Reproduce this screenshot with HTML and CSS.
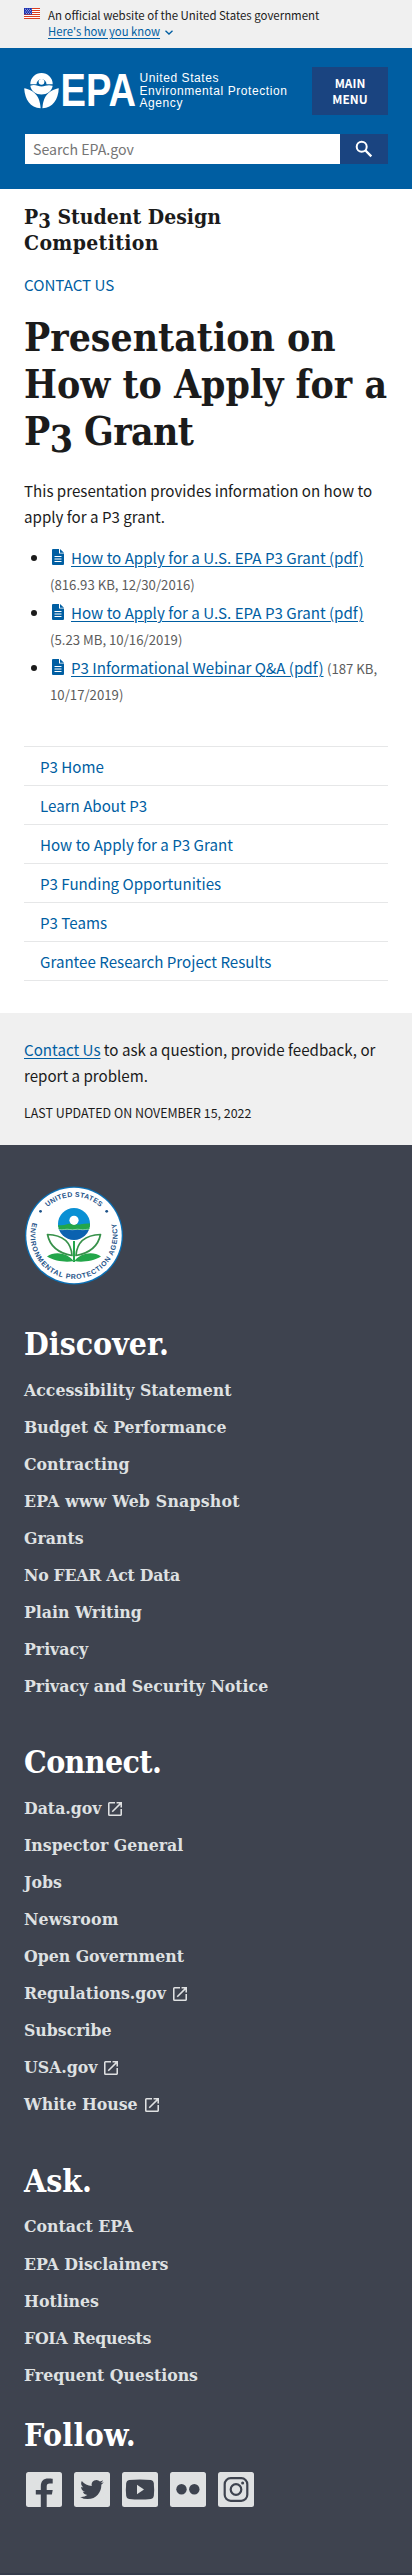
FILE: index.html
```html
<!DOCTYPE html>
<html lang="en">
<head>
<meta charset="utf-8">
<title>Presentation on How to Apply for a P3 Grant | US EPA</title>
<link rel="stylesheet" href="styles.css">
</head>
<body>
<svg class="defs" width="0" height="0">
  <symbol id="doc" viewBox="0 0 12 16">
    <path fill="#005ea2" d="M0 1a1 1 0 0 1 1-1h6v4.500h5V15a1 1 0 0 1-1 1H1a1 1 0 0 1-1-1z"/>
    <path fill="#005ea2" d="M8 0l4 3.700H8z"/>
    <path stroke="#fff" stroke-width="1" d="M2.500 7.500h7M2.500 10h7M2.500 12.500h7"/>
  </symbol>
  <symbol id="ext" viewBox="3 3 18 18">
    <path fill="currentColor" d="M19 19H5V5h7V3H5a2 2 0 0 0-2 2v14a2 2 0 0 0 2 2h14c1.100 0 2-.9 2-2v-7h-2v7zM14 3v2h3.590l-9.830 9.830 1.410 1.410L19 6.410V10h2V3h-7z"/>
  </symbol>
</svg>

<section class="banner">
  <svg class="flag" viewBox="0 0 16 11" width="16" height="11">
    <path fill="#fff" d="M0 0h16v11H0z"/>
    <path stroke="#db3e1f" stroke-width="1" d="M0 .5h16M0 2.500h16M0 4.500h16M0 6.500h16M0 8.500h16M0 10.500h16"/>
    <path fill="#1e33b1" d="M0 0h8v6.500H0z"/>
    <path stroke="#fff" stroke-width=".7" stroke-dasharray=".8 1.200" d="M1 1.300h6.500M2 2.700h5M1 4.100h6.500M2 5.500h5"/>
  </svg>
  <div class="banner-text">
    <div>An official website of the United States government</div>
    <div><a class="link banner-link" href="#">Here's how you know</a><svg class="chev" viewBox="0 0 8 5" width="8" height="5"><path fill="none" stroke="#005ea2" stroke-width="1.300" d="M.5 .7L4 4L7.500 .7"/></svg></div>
  </div>
</section>

<header class="header">
  <div class="brand-row">
    <div class="logo">
      <svg class="logo-mark" viewBox="0 0 113 38" width="113" height="38" fill="#fff">
        <path d="M6.300 12.200a11.200 11.200 0 0 1 22.400 0h-6.200a5 5 0 0 0-10 0z"/>
        <circle cx="17.500" cy="9.800" r="2.900"/>
        <path d="M6.300 13.800c2.500-1.200 5-.9 7.500 0s5 .9 7.500 0 5-.9 7.400 0c-1 5.700-5.700 8.700-11.200 8.700S7.300 19.500 6.300 13.800z"/>
        <path d="M.2 16.300C8 18 15.800 22 16.600 36.300 6 35.500 1 28 .2 16.300z"/>
        <path d="M34.800 16.300C27 18 19.200 22 18.400 36.300 29 35.500 34 28 34.800 16.300z"/>
        <text class="logo-epa" x="36.500" y="34.300" textLength="75.500" lengthAdjust="spacingAndGlyphs">EPA</text>
      </svg>
      <div class="logo-name">
        <div>United States</div>
        <div>Environmental Protection</div>
        <div>Agency</div>
      </div>
    </div>
    <button class="menu-btn">MAIN<br>MENU</button>
  </div>
  <div class="search">
    <div class="search-input">Search EPA.gov</div>
    <button class="search-btn"><svg viewBox="0 0 18 18" width="18" height="18"><circle cx="6.700" cy="6.700" r="5" fill="none" stroke="#fff" stroke-width="2"/><path d="M10.500 10.500L16.300 16.300" stroke="#fff" stroke-width="2.400"/></svg></button>
  </div>
</header>

<main class="main">
  <h2 class="site-title">P<span class="osf">3</span> Student Design<br><span class="wide">Competition</span></h2>
  <a class="contact" href="#">CONTACT US</a>
  <h1 class="page-title">Presentation on<br>How to Apply for a<br><span class="tight">P<span class="osf">3</span> Grant</span></h1>
  <p class="intro">This presentation provides information on how to<br>apply for a P3 grant.</p>
  <ul class="files">
    <li><svg class="doc"><use href="#doc"/></svg><a class="link" href="#">How to Apply for a U.S. EPA P3 Grant (pdf)</a><br><span class="meta">(816.93 KB, 12/30/2016)</span></li>
    <li><svg class="doc"><use href="#doc"/></svg><a class="link" href="#">How to Apply for a U.S. EPA P3 Grant (pdf)</a><br><span class="meta">(5.23 MB, 10/16/2019)</span></li>
    <li><svg class="doc"><use href="#doc"/></svg><a class="link" href="#">P3 Informational Webinar Q&amp;A (pdf)</a> <span class="meta">(187 KB,<br>10/17/2019)</span></li>
  </ul>
  <nav class="sidenav">
    <a href="#">P3 Home</a>
    <a href="#">Learn About P3</a>
    <a href="#">How to Apply for a P3 Grant</a>
    <a href="#">P3 Funding Opportunities</a>
    <a href="#">P3 Teams</a>
    <a href="#">Grantee Research Project Results</a>
  </nav>
</main>

<section class="feedback">
  <p class="ask"><a class="link" href="#">Contact Us</a> to ask a question, provide feedback, or<br>report a problem.</p>
  <p class="updated">LAST UPDATED ON NOVEMBER 15, 2022</p>
</section>

<footer class="footer">
  <svg class="seal" viewBox="0 0 100 100" width="100" height="100">
    <defs>
      <path id="arcTop" d="M11.300 49.500A38.700 38.700 0 0 1 88.700 49.500"/>
      <path id="arcBottom" d="M11.600 29A43.500 43.500 0 1 0 88.400 29"/>
      <clipPath id="globe"><circle cx="50" cy="38" r="16"/></clipPath>
    </defs>
    <circle cx="50" cy="49.500" r="49" fill="#0b70b5"/>
    <circle cx="50" cy="49.500" r="47.700" fill="#fff"/>
    <text class="seal-text"><textPath href="#arcTop" startOffset="50%" text-anchor="middle">UNITED STATES</textPath></text>
    <text class="seal-text seal-bottom"><textPath href="#arcBottom" startOffset="50%" text-anchor="middle">ENVIRONMENTAL PROTECTION AGENCY</textPath></text>
    <circle cx="16.500" cy="25.300" r="1.400" fill="#1d5288"/>
    <circle cx="82.700" cy="25.300" r="1.400" fill="#1d5288"/>
    <g clip-path="url(#globe)">
      <path fill="#0a90d4" d="M30 20h40v21H30z"/>
      <path fill="#0b62b0" d="M30 42h40v14H30z"/>
      <path fill="#23a64a" d="M30 38c5 1.500 9 1.500 13 .3s8 .2 11 .2 8-2 16-.5v6H30z"/>
      <path fill="none" stroke="#bfe3f2" stroke-width=".6" d="M30 43.500c4-1 7 1 10.500 0s7 1 10.500 0 7 1 10.500 0 5 1 8 0"/>
    </g>
    <circle cx="50" cy="34.300" r="4.600" fill="#fff"/>
    <path fill="#23a64a" d="M49 55h2v21h-2zM49.500 75C44 67 31 64.500 23 70.500c8 5 20 6 26.500 4.500zM50.500 75C56 67 69 64.500 77 70.500c-8 5-20 6-26.500 4.500z"/>
    <path fill="#fff" stroke="#37914a" stroke-width="1.700" stroke-linejoin="round" d="M23.500 48.500C38 49 47 55 48 69.500C34 67 26 61 23.500 48.500zM76.500 48.500C62 49 53 55 52 69.500C66 67 74 61 76.500 48.500z"/>
  </svg>

  <section class="group">
    <h2>Discover.</h2>
    <ul>
      <li>Accessibility Statement</li><li>Budget &amp; Performance</li><li>Contracting</li><li class="loose">EPA www Web Snapshot</li><li>Grants</li><li class="snug">No FEAR Act Data</li><li>Plain Writing</li><li>Privacy</li><li>Privacy and Security Notice</li>
    </ul>
  </section>
  <section class="group group-connect">
    <h2 class="tight">Connect.</h2>
    <ul>
      <li>Data.gov<svg class="ext"><use href="#ext"/></svg></li><li>Inspector General</li><li>Jobs</li><li class="loose">Newsroom</li><li>Open Government</li><li>Regulations.gov<svg class="ext"><use href="#ext"/></svg></li><li>Subscribe</li><li>USA.gov<svg class="ext"><use href="#ext"/></svg></li><li>White House<svg class="ext"><use href="#ext"/></svg></li>
    </ul>
  </section>
  <section class="group group-ask">
    <h2>Ask.</h2>
    <ul>
      <li>Contact EPA</li><li>EPA Disclaimers</li><li>Hotlines</li><li class="snug">FOIA Requests</li><li>Frequent Questions</li>
    </ul>
  </section>
  <section class="follow">
    <h2 class="wide">Follow.</h2>
    <div class="social">
      <svg viewBox="0 0 36 35"><rect class="tile" width="36" height="35" rx="2.500"/><path class="glyph" d="M14.800 35V22.500h-5V18h5v-3.500c0-5.500 2.700-8 7.500-8 1.800 0 3.400.1 4.400.3v4.700h-2.900c-2.400 0-3.100 1.200-3.100 3.200V18h6l-.8 4.500h-5.200V35z"/></svg>
      <svg viewBox="0 0 36 35"><rect class="tile" width="36" height="35" rx="2.500"/><path class="glyph" transform="translate(6.200 5.800) scale(.98)" d="M23.950 4.570a10 10 0 0 1-2.820.770 4.960 4.960 0 0 0 2.160-2.720c-.95.550-2 .96-3.130 1.180a4.920 4.920 0 0 0-8.380 4.480C7.690 8.100 4.070 6.130 1.640 3.160a4.820 4.820 0 0 0-.67 2.480c0 1.710.87 3.210 2.190 4.100a4.900 4.900 0 0 1-2.230-.62v.06a4.920 4.920 0 0 0 3.950 4.830 5 5 0 0 1-2.210.08 4.940 4.940 0 0 0 4.600 3.420A9.870 9.870 0 0 1 0 19.540a13.940 13.940 0 0 0 7.550 2.210c9.050 0 14-7.500 14-13.980 0-.21 0-.42-.02-.63a9.940 9.940 0 0 0 2.460-2.550z"/></svg>
      <svg viewBox="0 0 36 35"><rect class="tile" width="36" height="35" rx="2.500"/><path class="glyph" d="M7 8Q18 6.800 29 8Q31.500 8.300 31.800 11Q32.500 17.500 31.800 24Q31.500 26.700 29 27Q18 28.200 7 27Q4.500 26.700 4.200 24Q3.500 17.500 4.200 11Q4.500 8.300 7 8z"/><path class="tile" d="M15 12.800L22 17.500L15 22.300z"/></svg>
      <svg viewBox="0 0 36 35"><rect class="tile" width="36" height="35" rx="2.500"/><circle class="glyph" cx="11.500" cy="17.300" r="5.200"/><circle class="glyph" cx="24.300" cy="17.300" r="5.200"/></svg>
      <svg viewBox="0 0 36 35"><rect class="tile" width="36" height="35" rx="2.500"/><rect class="line" x="6.700" y="6.200" width="22.600" height="22.600" rx="6"/><circle class="line" cx="18" cy="17.500" r="5.300"/><circle class="glyph" cx="24.600" cy="11" r="1.500"/></svg>
    </div>
  </section>
</footer>
</body>
</html>
```
FILE: styles.css
```css
* { box-sizing: border-box; }
body {
  margin: 0;
  color: #1b1b1b;
  background: #fff;
  font: 15.13px/26px "Noto Sans CJK SC", "Open Sans", sans-serif;
}
h1, h2, p, ul { margin: 0; padding: 0; }
h1, h2, .group li { font-family: "DejaVu Serif Condensed", "DejaVu Serif", serif; font-stretch: condensed; font-weight: 700; }
a { color: #005ea2; text-decoration: none; }
button { border: 0; padding: 0; color: #fff; background: #1a4480; font-family: inherit; }
.defs { display: block; }
.link { text-decoration: underline; text-decoration-thickness: 1px; text-underline-offset: 2px; }
.osf { font-size: .96em; line-height: 1; position: relative; top: .18em; }
.wide { letter-spacing: .35px; }
.tight { letter-spacing: -.6px; }
.loose { letter-spacing: .22px; }
.snug { letter-spacing: -.26px; }

.banner { display: flex; gap: 8px; height: 48px; padding: 7px 24px 0; background: #f0f0f0; font-size: 11.45px; line-height: 16px; }
.flag { margin-top: 1px; }
.banner-link { font-size: 11.3px; }
.chev { margin: 0 0 1px 5px; }

.header { height: 141px; padding: 19px 24px 0; background: #005ea2; }
.brand-row { display: flex; justify-content: space-between; align-items: flex-start; height: 67px; }
.logo { display: flex; gap: 2.500px; margin-top: 5px; }
.logo-mark { overflow: visible; }
.logo-epa { font: 700 45.5px "Liberation Sans", Arial, sans-serif; }
.logo-name { color: #fff; font: 12px/12.5px "Liberation Sans", Arial, sans-serif; letter-spacing: .58px; white-space: nowrap; }
.menu-btn { width: 76px; height: 48px; font-size: 11.9px; font-weight: 700; line-height: 16px; }
.search { display: flex; padding-left: 1px; }
.search-input { width: 315px; height: 30px; padding-left: 8px; background: #fff; color: #757575; font-size: 14.15px; line-height: 30px; }
.search-btn { display: flex; flex: 1; align-items: center; justify-content: center; }

.main { padding: 15px 24px 32px; }
.site-title { font-size: 21px; line-height: 26px; }
.contact { display: block; margin-top: 16px; line-height: 24px; }
.page-title { margin: 18px 0 22px; font-size: 38.8px; line-height: 47px; white-space: nowrap; }
.intro { white-space: nowrap; }
.files { display: grid; gap: 3px; margin: 15px 0 40px; padding-left: 26px; }
.files li { white-space: nowrap; height: 52px; }
.doc { width: 12px; height: 16px; margin: 0 7px 0 2px; vertical-align: -1px; }
.meta { color: #5c5c5c; font-size: 13.2px; line-height: 1; }
.sidenav { border-bottom: 1px solid #e6e7e8; }
.sidenav a { display: block; height: 39px; padding-left: 16px; border-top: 1px solid #e6e7e8; line-height: 38px; }

.feedback { height: 132px; padding: 23px 24px 0; background: #f0f0f0; }
.ask { white-space: nowrap; }
.updated { margin-top: 15px; font-size: 12.44px; line-height: 20px; }

.footer { height: 1430px; padding: 41px 24px 0; background: #3e434f; color: #dfe1e2; border-bottom: 2px solid #353b4a; }
.seal { display: block; margin-bottom: 40px; }
.seal-text { font: 700 7px "Liberation Sans", Arial, sans-serif; letter-spacing: .25px; fill: #1d5288; }
.seal-bottom { letter-spacing: .72px; }
.footer h2 { color: #fff; font-size: 31.75px; line-height: 36px; }
.group { margin-bottom: 32.6px; }
.group-connect { margin-bottom: 33.4px; }
.group-ask { margin-bottom: 17px; }
.group ul { margin-top: 15.6px; list-style: none; }
.group li { height: 37.1px; font-size: 17.5px; line-height: 24px; white-space: nowrap; }
.ext { width: 14px; height: 14px; margin-left: 7px; vertical-align: -2px; }
.social { display: flex; gap: 12px; margin-top: 19px; padding-left: 2px; }
.social svg { width: 36px; height: 35px; }
.tile { fill: #dfe1e2; }
.glyph { fill: #3e434f; }
.line { fill: none; stroke: #3e434f; stroke-width: 2.200; }
```
